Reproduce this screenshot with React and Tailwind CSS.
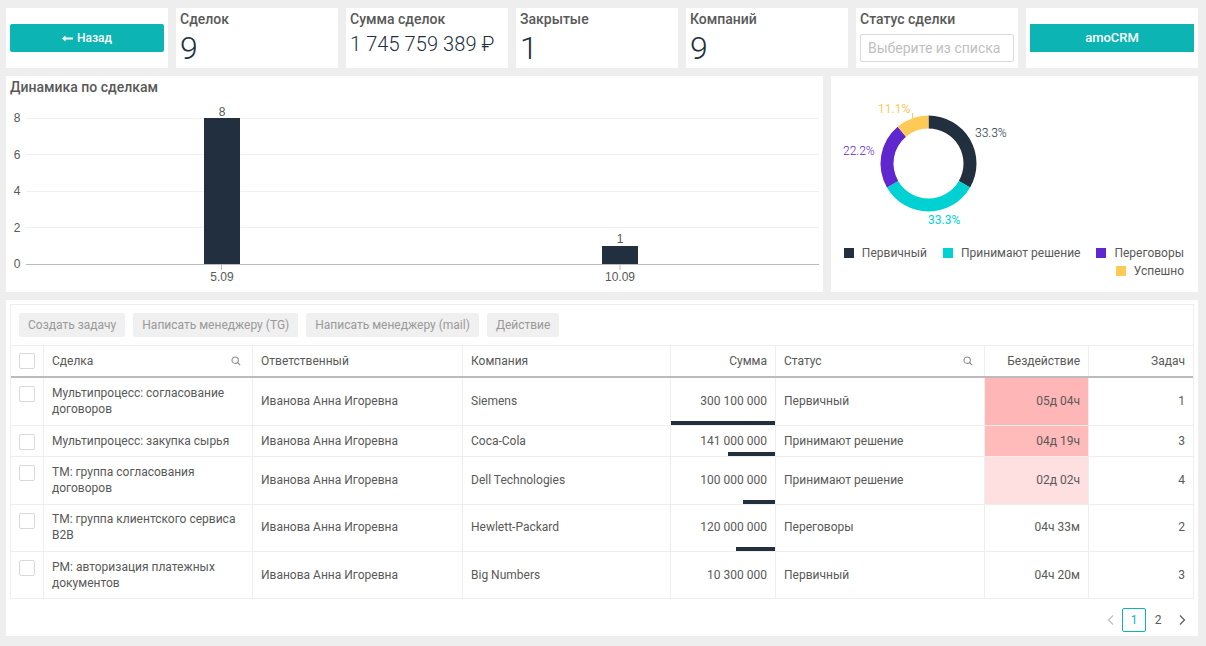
import React from "react";

const DARK = "#222f3e";
const TEAL = "#00d2d3";
const PURPLE = "#5f27cd";
const YELLOW = "#feca57";

function Stat({ title, value, big = true, w = "w-[162px]" }) {
  return (
    <div className={`${w} h-[60px] bg-white px-1 pt-[3px]`}>
      <div className="text-[14px] leading-[17px] font-medium text-[#595959]">{title}</div>
      {big ? (
        <div className="text-[32px] leading-[38px] font-light text-[#222f3e] mt-[1px]">{value}</div>
      ) : (
        <div className="text-[20px] leading-[24px] font-light tracking-[0.08px] text-[#222f3e] mt-[4px]">{value}</div>
      )}
    </div>
  );
}

function BarChart() {
  const ticks = [
    [8, 118.5, 122],
    [6, 154.5, 159],
    [4, 191.5, 195],
    [2, 227.5, 232],
  ];
  return (
    <svg width="817" height="196" viewBox="6 96 817 196" className="block">
      {ticks.map(([t, y, by]) => (
        <g key={t}>
          <line x1="26" x2="819" y1={y} y2={y} stroke="#f0f0f0" />
          <text x="17" y={by} textAnchor="middle" fontSize="12" fill="#595959" fontFamily="Liberation Sans">{t}</text>
        </g>
      ))}
      <text x="17" y="268" textAnchor="middle" fontSize="12" fill="#595959" fontFamily="Liberation Sans">0</text>
      <rect x="204" y="118" width="36" height="146" fill={DARK} />
      <rect x="602" y="246" width="36" height="18" fill={DARK} />
      <line x1="26" x2="819" y1="264.5" y2="264.5" stroke="#bbbbbb" />
      <line x1="221.5" x2="221.5" y1="265" y2="270" stroke="#bbbbbb" />
      <line x1="620" x2="620" y1="265" y2="270" stroke="#bbbbbb" />
      <text x="222" y="116" textAnchor="middle" fontSize="12" fill="#595959" fontFamily="Liberation Sans">8</text>
      <text x="620" y="243" textAnchor="middle" fontSize="12" fill="#595959" fontFamily="Liberation Sans">1</text>
      <text x="222" y="281" textAnchor="middle" fontSize="12" fill="#595959" fontFamily="Liberation Sans">5.09</text>
      <text x="620" y="281" textAnchor="middle" fontSize="12" fill="#595959" fontFamily="Liberation Sans">10.09</text>
    </svg>
  );
}

function arc(cx, cy, r0, r1, a0, a1) {
  const p = (r, a) => [cx + r * Math.sin(a), cy - r * Math.cos(a)];
  const large = a1 - a0 > Math.PI ? 1 : 0;
  const [x0, y0] = p(r1, a0);
  const [x1, y1] = p(r1, a1);
  const [x2, y2] = p(r0, a1);
  const [x3, y3] = p(r0, a0);
  return `M${x0} ${y0}A${r1} ${r1} 0 ${large} 1 ${x1} ${y1}L${x2} ${y2}A${r0} ${r0} 0 ${large} 0 ${x3} ${y3}Z`;
}

function Donut() {
  const parts = [
    [3 / 9, DARK],
    [3 / 9, TEAL],
    [2 / 9, PURPLE],
    [1 / 9, YELLOW],
  ];
  let acc = 0;
  const cx = 97.5;
  const cy = 87.5;
  return (
    <svg width="367" height="166" viewBox="0 0 367 166" className="block">
      {parts.map(([v, c]) => {
        const a0 = acc * 2 * Math.PI;
        acc += v;
        const a1 = acc * 2 * Math.PI;
        return <path key={c} d={arc(cx, cy, 35, 48, a0, a1)} fill={c} />;
      })}
      <path d="M81.5 37 V42" fill="none" stroke={YELLOW} strokeWidth="1" />
      <g fontSize="12" fontFamily="Roboto">
        <text x="144" y="61" fill={DARK} fontWeight="300">33.3%</text>
        <text x="97" y="148" fill={TEAL}>33.3%</text>
        <text x="12" y="79" fill={PURPLE} fontWeight="300">22.2%</text>
        <text x="47" y="37" fill={YELLOW}>11.1%</text>
      </g>
    </svg>
  );
}

function Legend({ color, label }) {
  return (
    <div className="flex items-center gap-2 h-[14px]">
      <span className="w-[10px] h-[10px]" style={{ backgroundColor: color }} />
      <span className="text-[12px] leading-[14px] text-[#595959]">{label}</span>
    </div>
  );
}

function Check() {
  return <span className="block w-4 h-4 bg-white border border-[#d9d9d9] rounded-[2px]" />;
}

function SearchIcon() {
  return (
    <svg width="10" height="10" viewBox="0 0 12 12" fill="none" stroke="#8c8c8c" strokeWidth="1.3" className="block">
      <circle cx="5" cy="5" r="3.8" />
      <line x1="7.8" y1="7.8" x2="11" y2="11" />
    </svg>
  );
}

const GRID = "grid grid-cols-[33px_209px_210px_208px_105px_209px_104px_104px]";
const CELL = "border-r border-[#eeeeee] flex items-center text-[12px] leading-[16px] text-[#595959]";

const rows = [
  { h: "h-[48px]", pb: "pb-[2px]", name: ["Мультипроцесс: согласование", "договоров"], company: "Siemens", sum: "300 100 000", bar: "w-[104px]", status: "Первичный", idle: "05д 04ч", idleBg: "bg-[#ffb6b6]", tasks: 1 },
  { h: "h-[31px]", pb: "pb-0", name: ["Мультипроцесс: закупка сырья"], company: "Coca-Cola", sum: "141 000 000", bar: "w-[47px]", status: "Принимают решение", idle: "04д 19ч", idleBg: "bg-[#ffbaba]", tasks: 3 },
  { h: "h-[48px]", pb: "pb-[2px]", name: ["ТМ: группа согласования", "договоров"], company: "Dell Technologies", sum: "100 000 000", bar: "w-[32px]", status: "Принимают решение", idle: "02д 02ч", idleBg: "bg-[#ffe0e0]", tasks: 4 },
  { h: "h-[47px]", pb: "pb-[2px]", name: ["ТМ: группа клиентского сервиса", "B2B"], company: "Hewlett-Packard", sum: "120 000 000", bar: "w-[39px]", status: "Переговоры", idle: "04ч 33м", idleBg: "bg-white", tasks: 2 },
  { h: "h-[46px]", pb: "pb-0", name: ["РМ: авторизация платежных", "документов"], company: "Big Numbers", sum: "10 300 000", bar: "", status: "Первичный", idle: "04ч 20м", idleBg: "bg-white", tasks: 3 },
];

export default function App() {
  return (
    <div
      className="w-[1206px] h-[646px] bg-[#eeeeee] pl-[6px] pt-2 overflow-hidden"
      style={{ fontFamily: "Roboto, 'Liberation Sans', sans-serif" }}
    >
      <div className="flex gap-2">
        <div className="w-[162px] h-[60px] bg-white flex items-center pl-1">
          <button className="w-[154px] h-7 rounded-[2px] bg-[#0cb4b3] text-white text-[12px] font-medium flex items-center justify-center gap-[4px]">
            <svg width="11" height="7" viewBox="0 0 11 7" fill="white" className="block">
              <path d="M0 3.5 L3.5 0.5 V2.6 H11 V4.4 H3.5 V6.5 Z" />
            </svg>
            <span>Назад</span>
          </button>
        </div>
        <Stat title="Сделок" value="9" />
        <Stat title="Сумма сделок" value="1 745 759 389 ₽" big={false} />
        <Stat title="Закрытые" value="1" />
        <Stat title="Компаний" value="9" />
        <div className="w-[162px] h-[60px] bg-white px-1 pt-[3px]">
          <div className="text-[14px] leading-[17px] font-medium text-[#595959]">Статус сделки</div>
          <div className="mt-[6px] w-[154px] h-7 border border-[#d9d9d9] rounded-[2px] flex items-center px-[7px] text-[14px] text-[#bfbfbf]">
            Выберите из списка
          </div>
        </div>
        <div className="w-[172px] h-[60px] bg-white flex items-center pl-1">
          <button className="w-[164px] h-7 bg-[#0cb4b3] text-white text-[13px] font-medium flex items-center justify-center">
            amoCRM
          </button>
        </div>
      </div>

      <div className="flex gap-2 mt-2">
        <div className="w-[817px] h-[216px] bg-white">
          <div className="h-5 pl-1 pt-[3px] text-[14px] leading-[17px] font-medium text-[#595959]">Динамика по сделкам</div>
          <BarChart />
        </div>
        <div className="w-[367px] h-[216px] bg-white">
          <Donut />
          <div className="flex flex-wrap justify-end gap-x-4 gap-y-1 pr-[14px] mt-[4px]">
            <Legend color={DARK} label="Первичный" />
            <Legend color={TEAL} label="Принимают решение" />
            <Legend color={PURPLE} label="Переговоры" />
            <Legend color={YELLOW} label="Успешно" />
          </div>
        </div>
      </div>

      <div className="w-[1192px] h-[336px] bg-white mt-2 p-1">
        <div className="border border-[#eeeeee] w-[1184px]">
          <div className="h-[41px] flex items-start gap-2 pt-2 pl-2 border-b border-[#eeeeee]">
            {["Создать задачу", "Написать менеджеру (TG)", "Написать менеджеру (mail)", "Действие"].map((t) => (
              <button key={t} className="h-6 px-[9px] bg-[#f0f0f0] rounded-[2px] text-[12px] text-[#999999]">
                {t}
              </button>
            ))}
          </div>
          <div className={`${GRID} h-[32px] border-b-2 border-[#bbbbbb]`}>
            <div className={`${CELL} pl-2`}><Check /></div>
            <div className={`${CELL} justify-between pl-2 pr-[11px]`}><span>Сделка</span><SearchIcon /></div>
            <div className={`${CELL} pl-2`}>Ответственный</div>
            <div className={`${CELL} pl-2`}>Компания</div>
            <div className={`${CELL} justify-end pr-2`}>Сумма</div>
            <div className={`${CELL} justify-between pl-2 pr-[11px]`}><span>Статус</span><SearchIcon /></div>
            <div className={`${CELL} justify-end pr-2`}>Бездействие</div>
            <div className="flex items-center justify-end pr-2 text-[12px] text-[#595959]">Задач</div>
          </div>
          {rows.map((r, i) => (
            <div key={i} className={`${GRID} ${r.h} ${i < rows.length - 1 ? "border-b border-[#eeeeee]" : ""}`}>
              <div className="border-r border-[#eeeeee] pl-2 pt-2"><Check /></div>
              <div className={`${CELL} ${r.pb} pl-2`}>
                <div>{r.name.map((l) => <div key={l}>{l}</div>)}</div>
              </div>
              <div className={`${CELL} ${r.pb} pl-2`}>Иванова Анна Игоревна</div>
              <div className={`${CELL} ${r.pb} pl-2`}>{r.company}</div>
              <div className={`${CELL} ${r.pb} relative justify-end pr-2`}>
                {r.sum}
                {r.bar && <span className={`absolute right-0 bottom-0 h-1 bg-[#222f3e] ${r.bar}`} />}
              </div>
              <div className={`${CELL} ${r.pb} pl-2`}>{r.status}</div>
              <div className={`${CELL} ${r.pb} justify-end pr-2 ${r.idleBg}`}>{r.idle}</div>
              <div className={`${r.pb} flex items-center justify-end pr-2 text-[12px] text-[#595959]`}>{r.tasks}</div>
            </div>
          ))}
        </div>
        <div className="flex items-center justify-end pr-[2px] mt-[9px] w-[1184px]">
          <svg width="22" height="24" viewBox="0 0 22 24" fill="none" stroke="#bfbfbf" strokeWidth="1.2"><path d="M13 7.5 L8.5 12 L13 16.5" /></svg>
          <span className="w-6 h-6 border border-[#0cb4b3] rounded-[2px] flex items-center justify-center text-[12px] text-[#0cb4b3]">1</span>
          <span className="w-6 h-6 flex items-center justify-center text-[12px] text-[#595959]">2</span>
          <svg width="22" height="24" viewBox="0 0 22 24" fill="none" stroke="#595959" strokeWidth="1.2"><path d="M10 7.5 L14.5 12 L10 16.5" /></svg>
        </div>
      </div>
    </div>
  );
}
